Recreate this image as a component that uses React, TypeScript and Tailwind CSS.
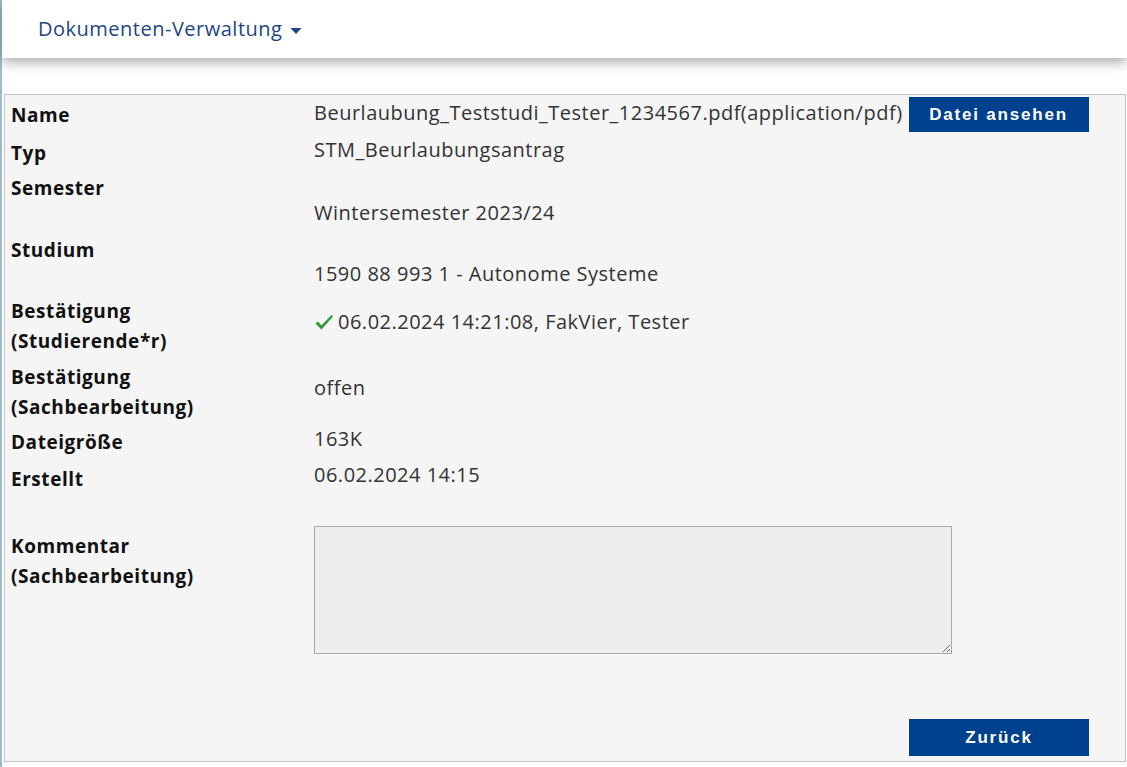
import React from "react";

const font = { fontFamily: '"Open Sans", "Noto Sans", sans-serif' };

// Label cell in the left column
const Label = ({ children, className = "" }: { children: React.ReactNode; className?: string }) => (
  <div className={`w-[309px] shrink-0 pl-[6px] font-bold text-[19px] tracking-[0.55px] leading-[30px] text-[#111] ${className}`}>
    {children}
  </div>
);

// Value cell in the right column
const Value = ({ children, className = "" }: { children: React.ReactNode; className?: string }) => (
  <div className={`flex-1 self-start text-[20px] tracking-[0.5px] leading-[30px] text-[#333] ${className}`}>{children}</div>
);

const BlueButton = ({ label, className = "" }: { label: string; className?: string }) => (
  <button
    className={`bg-[#00418f] text-white font-bold text-[17px] tracking-[1.8px] ${className}`}
    style={{ fontFamily: '"Liberation Sans", Arial, sans-serif' }}
  >
    {label}
  </button>
);

export default function App() {
  return (
    <div className="min-h-[767px] bg-white border-l-2 border-[#9fbccc]" style={font}>
      {/* Header */}
      <div className="relative z-10 h-[58px] bg-white shadow-[0_4px_12px_rgba(0,0,0,0.35)] flex items-center pl-[36px]">
        <span className="text-[20px] tracking-[0.5px] text-[#1c4584] leading-none">Dokumenten-Verwaltung</span>
        <svg width="12" height="8" viewBox="0 0 12 8" className="ml-[8px] mt-[4px]">
          <path d="M0.5 1 L11.5 1 L6 7 Z" fill="#1c4584" />
        </svg>
      </div>

      <div className="pt-[36px] pl-[2px] pr-[1px]">
        <div className="border border-[#c4c4c4] bg-[#f5f5f5] h-[668px] flex flex-col">
          {/* Name */}
          <div className="flex h-[40px]">
            <Label className="mt-[5px]">Name</Label>
            <Value className="mt-[3px] flex items-start">
              <span>Beurlaubung_Teststudi_Tester_1234567.pdf(application/pdf)</span>
              <BlueButton label="Datei ansehen" className="ml-[6px] -mt-[1px] w-[180px] h-[35px]" />
            </Value>
          </div>
          {/* Typ */}
          <div className="flex h-[36px]">
            <Label className="mt-[3px]">Typ</Label>
            <Value>STM_Beurlaubungsantrag</Value>
          </div>
          {/* Semester */}
          <div className="flex h-[62px]">
            <Label className="mt-[2px]">Semester</Label>
            <Value className="mt-[27px]">Wintersemester 2023/24</Value>
          </div>
          {/* Studium */}
          <div className="flex h-[61px]">
            <Label className="mt-[2px]">Studium</Label>
            <Value className="mt-[26px]">1590 88 993 1 - Autonome Systeme</Value>
          </div>
          {/* Bestätigung Studierende */}
          <div className="flex h-[66px]">
            <Label className="mt-[2px]">
              Bestätigung
              <br />
              (Studierende*r)
            </Label>
            <Value className="mt-[13px] flex items-center">
              <svg width="20" height="18" viewBox="0 0 20 18" className="mr-[4px]">
                <path d="M1.5 10.5 L4 8.5 L7.5 12.5 L17.5 2 L19 3.5 L7.5 16.5 Z" fill="#2a9a2e" />
              </svg>
              <span>06.02.2024 14:21:08, FakVier, Tester</span>
            </Value>
          </div>
          {/* Bestätigung Sachbearbeitung */}
          <div className="flex h-[64px]">
            <Label className="mt-[2px]">
              Bestätigung
              <br />
              (Sachbearbeitung)
            </Label>
            <Value className="mt-[13px]">offen</Value>
          </div>
          {/* Dateigröße */}
          <div className="flex h-[36px]">
            <Label className="mt-[3px]">Dateigröße</Label>
            <Value>163K</Value>
          </div>
          {/* Erstellt */}
          <div className="flex h-[50px]">
            <Label className="mt-[4px]">Erstellt</Label>
            <Value>06.02.2024 14:15</Value>
          </div>
          {/* Kommentar */}
          <div className="flex">
            <Label className="mt-[21px]">
              Kommentar
              <br />
              (Sachbearbeitung)
            </Label>
            <div className="flex-1 mt-[16px]">
              <textarea
                disabled
                className="block w-[638px] h-[128px] bg-[#eeeeee] border border-[#a9a9a9] resize"
              />
            </div>
          </div>
          <div className="flex-1" />
          <div className="flex justify-end pr-[36px] pb-[5px]">
            <BlueButton label="Zurück" className="w-[180px] h-[37px]" />
          </div>
        </div>
      </div>
    </div>
  );
}
